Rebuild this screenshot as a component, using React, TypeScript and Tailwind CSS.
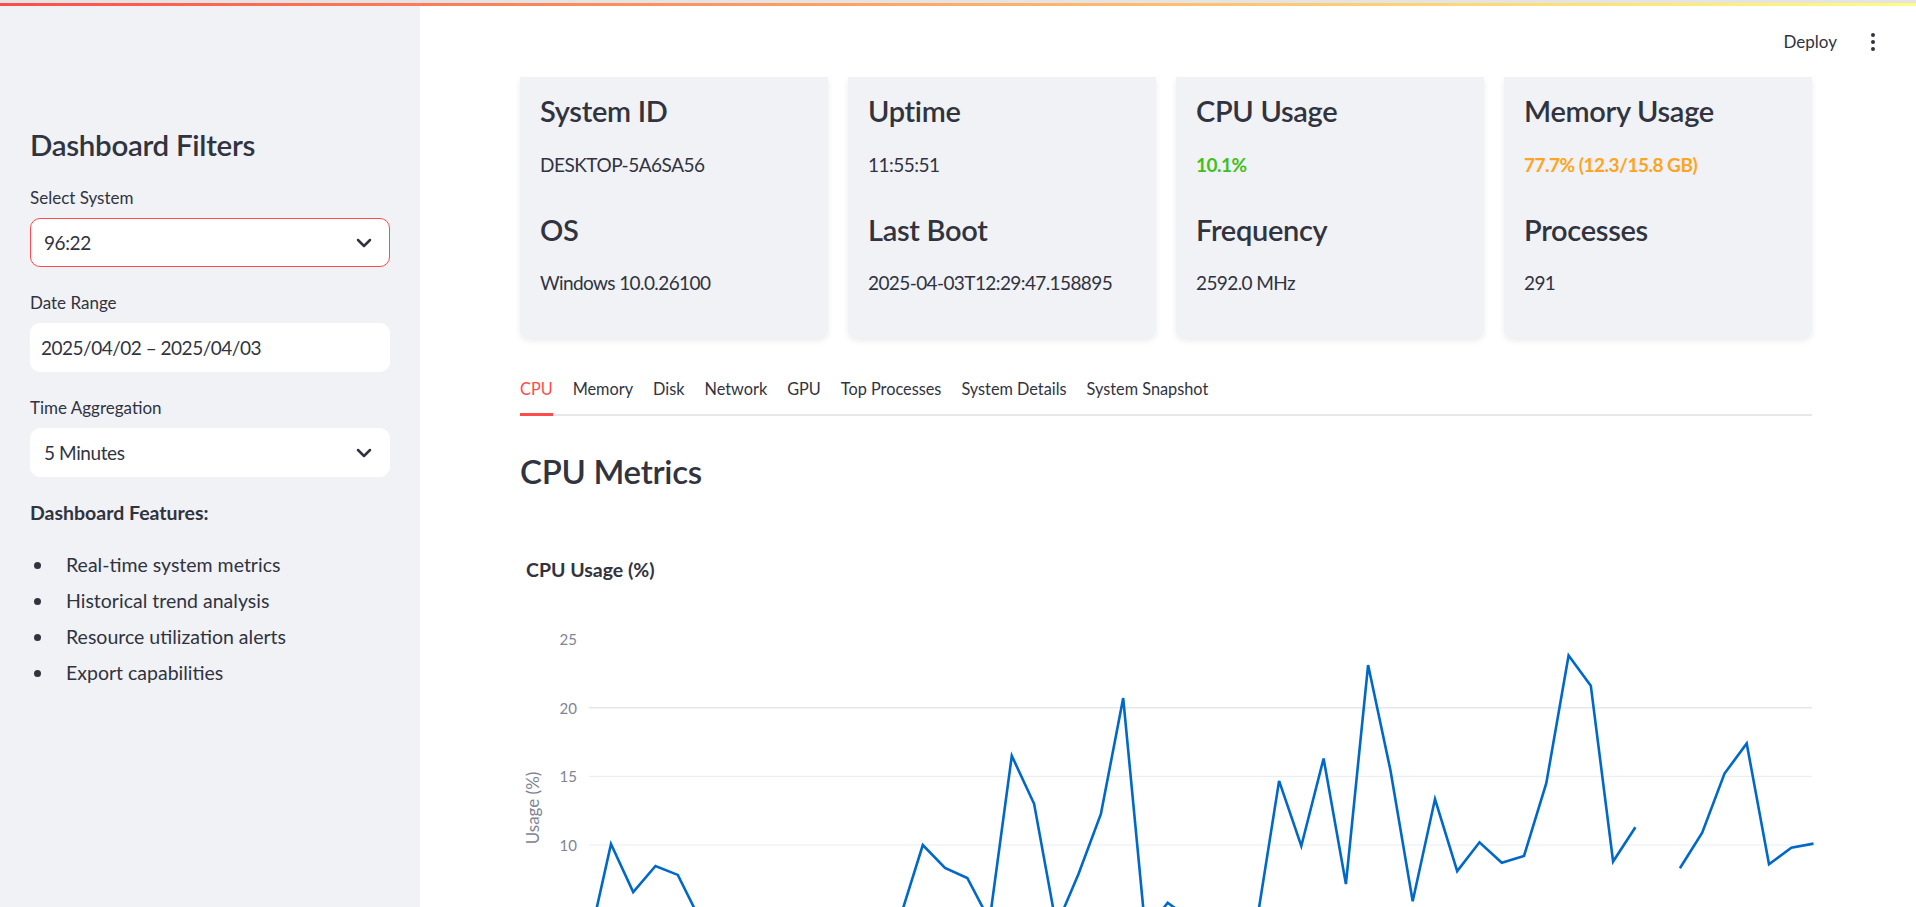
import { ChevronDown, EllipsisVertical } from "lucide-react";

// CPU usage samples (one per 5 minutes); null = missing sample
const cpuUsage: (number | null)[] = [
  2.8, 10.07, 6.58, 8.47, 7.82, 4.55, 3.6, 2.9, 3.2, 2.7, 3.4, 2.8, 3.1, 3.9,
  4.8, 10.0, 8.33, 7.6, 4.5, 16.5, 13.0, 4.1, 7.9, 12.26, 20.7, 3.7, 5.8, 4.6,
  3.5, 3.2, 4.4, 14.67, 9.93, 16.3, 7.15, 23.1, 15.46, 5.9, 13.35, 8.1, 10.2,
  8.7, 9.2, 14.5, 23.8, 21.6, 8.8, 11.3, null, 8.3, 10.9, 15.2, 17.4, 8.6, 9.8,
  10.1,
];

const tabs = [
  "CPU",
  "Memory",
  "Disk",
  "Network",
  "GPU",
  "Top Processes",
  "System Details",
  "System Snapshot",
];

const features = [
  "Real-time system metrics",
  "Historical trend analysis",
  "Resource utilization alerts",
  "Export capabilities",
];

type Stat = { label: string; value: string; tone?: string };

const cards: Stat[][] = [
  [
    { label: "System ID", value: "DESKTOP-5A6SA56" },
    { label: "OS", value: "Windows 10.0.26100" },
  ],
  [
    { label: "Uptime", value: "11:55:51" },
    { label: "Last Boot", value: "2025-04-03T12:29:47.158895" },
  ],
  [
    { label: "CPU Usage", value: "10.1%", tone: "text-[#3fc01c] font-bold" },
    { label: "Frequency", value: "2592.0 MHz" },
  ],
  [
    {
      label: "Memory Usage",
      value: "77.7% (12.3/15.8 GB)",
      tone: "text-[#ffa421] font-bold",
    },
    { label: "Processes", value: "291" },
  ],
];

const SelectBox = ({ value, active }: { value: string; active?: boolean }) => (
  <div
    className={
      active
        ? "flex h-[49px] items-center justify-between rounded-[10px] border border-[#ff4b4b] bg-white pl-[13px] pr-[13px]"
        : "flex h-[49px] items-center justify-between rounded-[10px] border border-white bg-white pl-[13px] pr-[13px]"
    }
  >
    <span className="text-[19px] leading-6 tracking-[-0.4px]">{value}</span>
    <ChevronDown size={24} strokeWidth={2.5} className="text-[#31333f]" />
  </div>
);

const Sidebar = () => (
  <aside className="flex w-[420px] shrink-0 flex-col bg-[#f0f2f6] px-[30px] pt-[121px]">
    <h2 className="text-[29.5px] font-semibold leading-[36px] tracking-[-0.3px]">
      Dashboard Filters
    </h2>

    <label className="mt-[24px] text-[17px] leading-[21px]">Select System</label>
    <div className="mt-[10px]">
      <SelectBox value="96:22" active />
    </div>

    <label className="mt-[25px] text-[17px] leading-[21px]">Date Range</label>
    <div className="mt-[10px] flex h-[49px] items-center rounded-[10px] bg-white pl-[11px]">
      <span className="whitespace-nowrap text-[19px] leading-6 tracking-[-0.5px]">
        2025/04/02 – 2025/04/03
      </span>
    </div>

    <label className="mt-[25px] text-[17px] leading-[21px]">Time Aggregation</label>
    <div className="mt-[10px]">
      <SelectBox value="5 Minutes" />
    </div>

    <p className="mt-[24px] text-[19.5px] font-bold leading-6">Dashboard Features:</p>
    <ul className="mt-[22px]">
      {features.map((f) => (
        <li key={f} className="flex h-[36px] items-center text-[19.5px]">
          <span className="ml-[4px] h-[7px] w-[7px] rounded-full bg-[#31333f]" />
          <span className="ml-[25px]">{f}</span>
        </li>
      ))}
    </ul>
  </aside>
);

const StatCard = ({ stats }: { stats: Stat[] }) => (
  <div className="rounded-b-[10px] bg-[#f0f2f6] px-5 pb-[43px] pt-4 shadow-[0_3px_6px_rgba(0,0,0,0.08)]">
    <h3 className="text-[29px] font-semibold leading-[36px] tracking-[-0.3px]">
      {stats[0].label}
    </h3>
    <p
      className={`mt-6 whitespace-nowrap text-[19px] leading-6 tracking-[-0.5px] ${stats[0].tone ?? ""}`}
    >
      {stats[0].value}
    </p>
    <h3 className="mt-[35px] text-[29px] font-semibold leading-[36px] tracking-[-0.3px]">
      {stats[1].label}
    </h3>
    <p className="mt-[23px] whitespace-nowrap text-[19px] leading-6 tracking-[-0.6px]">
      {stats[1].value}
    </p>
  </div>
);

const CpuChart = () => {
  const px = (i: number) => 68.7 + 22.27 * i;
  const py = (v: number) => 121.7 + (20 - v) * 13.73;

  // split the series into runs at missing samples
  const runs: string[] = [];
  let cur: string[] = [];
  cpuUsage.forEach((v, i) => {
    if (v === null) {
      if (cur.length) runs.push(cur.join(" "));
      cur = [];
    } else {
      cur.push(`${px(i).toFixed(1)},${py(v).toFixed(1)}`);
    }
  });
  if (cur.length) runs.push(cur.join(" "));

  const ticks = [25, 20, 15, 10];

  return (
    <svg width="1296" height="322" viewBox="0 0 1296 322" className="mt-1 block">
      {[20, 15, 10].map((t) => (
        <line
          key={t}
          x1="69"
          x2="1292"
          y1={py(t)}
          y2={py(t)}
          stroke={t === 20 ? "#e3e7ee" : "#e8ecf3"}
          strokeWidth={t === 20 ? 1.6 : 1}
        />
      ))}
      {ticks.map((t) => (
        <text
          key={t}
          x="57"
          y={py(t)}
          textAnchor="end"
          dominantBaseline="central"
          fontSize="15"
          fill="#808495"
          fontFamily="Lato, sans-serif"
        >
          {t}
        </text>
      ))}
      <text
        x="12"
        y="222"
        transform="rotate(-90 12 222)"
        textAnchor="middle"
        dominantBaseline="central"
        fontSize="17"
        fill="#808495"
        fontFamily="Lato, sans-serif"
      >
        Usage (%)
      </text>
      {runs.map((r, k) => (
        <polyline
          key={k}
          points={r}
          fill="none"
          stroke="#0068c9"
          strokeWidth="2.6"
          strokeLinejoin="miter"
        />
      ))}
    </svg>
  );
};

export default function App() {
  return (
    <div className="flex h-[907px] w-full flex-col overflow-hidden bg-white font-['Lato',sans-serif] text-[#31333f]">
      {/* decoration bar */}
      <div className="h-[3px] shrink-0 bg-[#e4e4e6]" />
      <div className="h-[3px] shrink-0 bg-gradient-to-r from-[#ff4b4b] to-[#fffd80]" />

      <div className="flex min-h-0 flex-1">
        <Sidebar />

        <main className="flex min-w-0 flex-1 flex-col overflow-hidden">
          {/* header */}
          <header className="flex h-[71px] shrink-0 items-center justify-end pr-[31px]">
            <span className="text-[17px] leading-[21px]">Deploy</span>
            <EllipsisVertical size={24} strokeWidth={2} className="ml-[24px] text-[#31333f]" />
          </header>

          <div className="pl-[100px] pr-[104px]">
            {/* system cards */}
            <div className="grid grid-cols-4 gap-5">
              {cards.map((c) => (
                <StatCard key={c[0].label} stats={c} />
              ))}
            </div>

            {/* tabs */}
            <div className="mt-[40px] flex items-start gap-5 border-b-2 border-[#e6e7ea]">
              {tabs.map((t, i) => (
                <button
                  key={t}
                  className={
                    i === 0
                      ? "-mb-[2px] border-b-[3px] border-[#ff4b4b] pb-[14px] text-[16.3px] leading-[21px] text-[#ff4b4b]"
                      : "pb-[15px] text-[16.3px] leading-[21px] text-[#31333f]"
                  }
                >
                  {t}
                </button>
              ))}
            </div>

            <h3 className="mt-[34px] text-[33px] font-semibold leading-[42px] tracking-[-0.3px]">
              CPU Metrics
            </h3>

            <p className="ml-[6px] mt-[66px] text-[19.5px] font-bold leading-6">CPU Usage (%)</p>
            <CpuChart />
          </div>
        </main>
      </div>
    </div>
  );
}
